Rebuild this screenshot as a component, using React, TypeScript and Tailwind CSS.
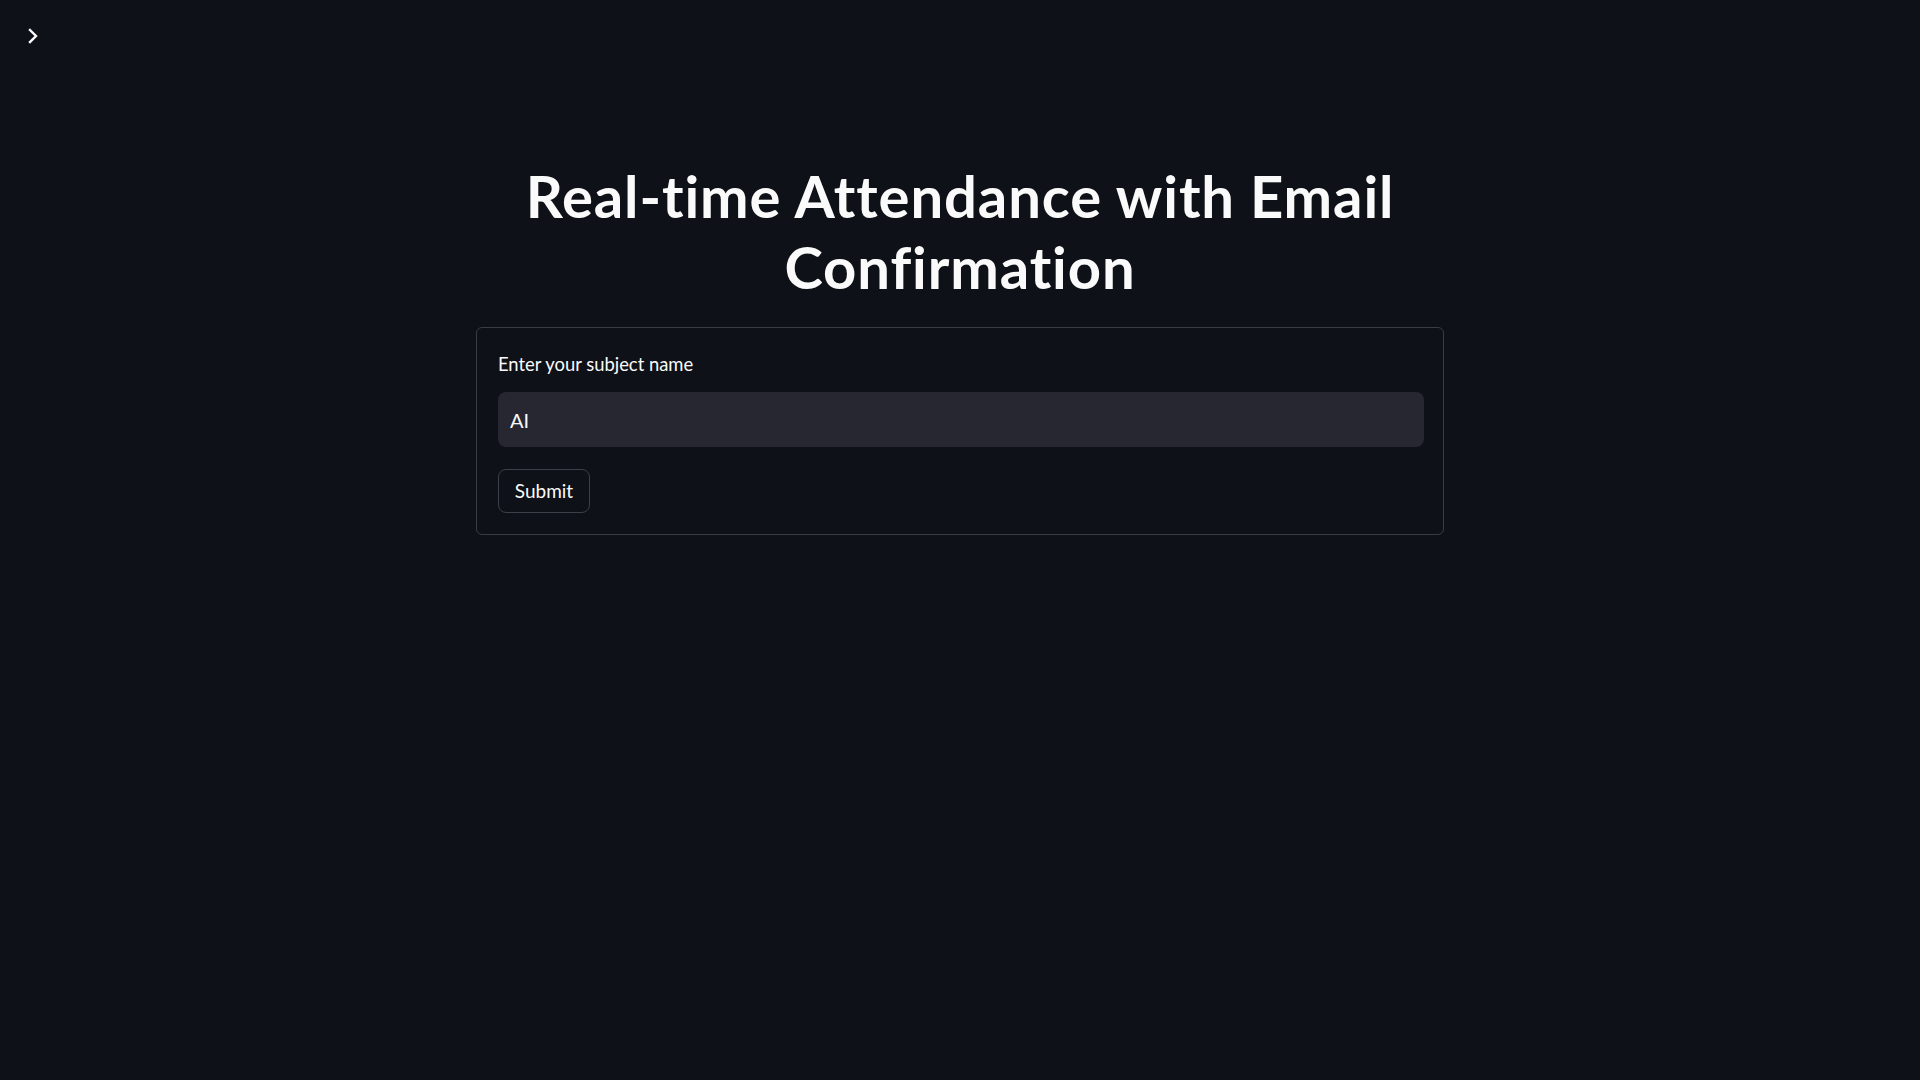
import React, { useState } from 'react';

const App = () => {
  const [subject, setSubject] = useState('AI');

  return (
    <div className="min-h-screen w-full bg-[#0e1117] text-[#fafafa] font-['Lato',sans-serif]">
      {/* sidebar toggle */}
      <button className="absolute left-[24px] top-[26px] flex h-[20px] w-[18px] items-center justify-center text-[#fafafa]">
        <svg width="10" height="16" viewBox="0 0 10 16" fill="none">
          <path d="M2 2l6 6-6 6" stroke="currentColor" strokeWidth="2.4" strokeLinecap="square" />
        </svg>
      </button>

      <div className="mx-auto flex w-[968px] flex-col pt-[160px]">
        <h1 className="text-center text-[58px] leading-[71px] font-bold tracking-[0.9px]">
          Real-time Attendance with Email
          <br />
          Confirmation
        </h1>

        <form
          className="mt-[25px] flex flex-col rounded-[6px] border border-[#3a3c44] pl-[21px] pr-[19px] pt-[22px] pb-[21px]"
          onSubmit={(e) => e.preventDefault()}
        >
          <label htmlFor="subject" className="flex h-[30px] items-center text-[18.4px]">
            Enter your subject name
          </label>
          <input
            id="subject"
            type="text"
            value={subject}
            onChange={(e) => setSubject(e.target.value)}
            className="mt-[12px] h-[55px] w-full rounded-[8px] bg-[#262730] px-[12px] text-[20px] text-[#fafafa] outline-none"
          />
          <div className="mt-[22px]">
            <button
              type="submit"
              className="h-[44px] w-[92px] rounded-[8px] border border-[#3e4049] bg-[#0e1117] text-[19px] text-[#fafafa]"
            >
              Submit
            </button>
          </div>
        </form>
      </div>
    </div>
  );
};

export default App;
